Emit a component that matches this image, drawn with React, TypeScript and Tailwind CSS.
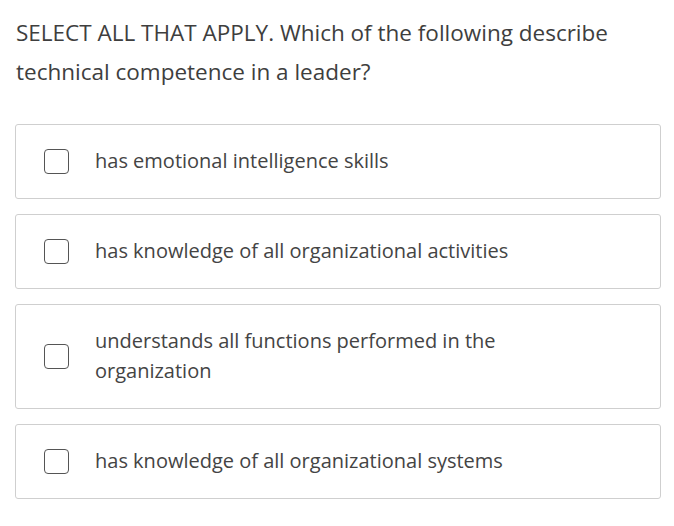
const options = [
  "has emotional intelligence skills",
  "has knowledge of all organizational activities",
  "understands all functions performed in the organization",
  "has knowledge of all organizational systems",
];

export default function App() {
  return (
    <div
      className="min-h-screen bg-white px-[15px] pt-[13px] text-[#3e3e3e]"
      style={{ fontFamily: '"Open Sans", sans-serif' }}
    >
      <h1 className="pl-[1px] pr-[40px] text-[22.5px] leading-[39px] font-normal">
        SELECT ALL THAT APPLY. Which of the following describe technical competence in a leader?
      </h1>

      <div className="mt-[33px] flex w-[646px] flex-col gap-[15px]">
        {options.map((opt) => (
          <label
            key={opt}
            className="flex items-center gap-[26px] rounded-[3px] border border-[#cfcfcf] pt-[21px] pb-[22px] pl-[28px] pr-[120px]"
          >
            <span className="h-[25px] w-[25px] shrink-0 rounded-[4px] border-[1.5px] border-[#555]" />
            <span className="text-[20px] leading-[30px] text-[#444]">{opt}</span>
          </label>
        ))}
      </div>
    </div>
  );
}
